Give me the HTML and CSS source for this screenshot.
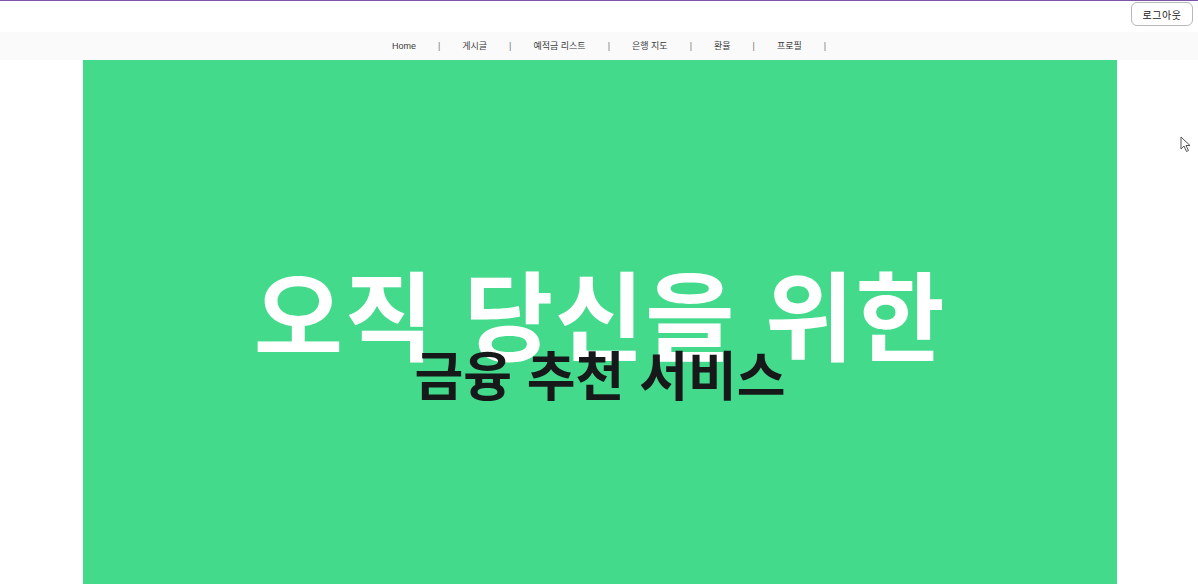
FILE: index.html
```html
<!DOCTYPE html>
<html lang="ko">
<head>
<meta charset="utf-8">
<title>금융 추천 서비스</title>
<link rel="stylesheet" href="styles.css">
</head>
<body>
<header class="topbar">
  <button class="logout">로그아웃</button>
</header>
<nav class="nav">
  <ul class="nav-list">
    <li class="nav-item nav-en">Home</li>
    <li class="nav-item">게시글</li>
    <li class="nav-item">예적금 리스트</li>
    <li class="nav-item">은행 지도</li>
    <li class="nav-item">환율</li>
    <li class="nav-item">프로필</li>
  </ul>
</nav>
<main class="hero">
  <h1 class="hero-title">오직 당신을 위한</h1>
  <h2 class="hero-sub">금융 추천 서비스</h2>
</main>
<svg class="cursor" width="12" height="18" viewBox="0 0 12 18" aria-hidden="true">
  <path d="M1 1 L1 13 L4 10 L6.5 15.5 L8.5 14.5 L6 9.5 L10 9.5 Z" fill="#fff" stroke="#555" stroke-width="1" stroke-linejoin="round"/>
</svg>
</body>
</html>
```
FILE: styles.css
```css
html, body {
  margin: 0;
  padding: 0;
  background: #ffffff;
  font-family: "Noto Sans CJK KR", "Noto Sans", sans-serif;
  overflow: hidden;
}

.topbar {
  height: 31px;
  border-top: 1px solid #7a55a8;
  display: flex;
  justify-content: flex-end;
  align-items: flex-start;
  padding-right: 5px;
}

.logout {
  margin-top: 1px;
  height: 24px;
  width: 62px;
  border: 1px solid #b8b8b8;
  border-radius: 6px;
  background: #ffffff;
  color: #222;
  font-family: "Noto Sans CJK KR", sans-serif;
  font-size: 10px;
  padding: 0;
  letter-spacing: 0.5px;
}

.nav {
  height: 28px;
  background: #fafafa;
  display: flex;
  justify-content: center;
  align-items: center;
}

.nav-list {
  list-style: none;
  margin: 0;
  padding: 0 0 0 20px;
  display: flex;
  align-items: center;
  gap: 22px;
}

.nav-item {
  font-size: 9px;
  color: #3a3a3a;
  display: flex;
  gap: 22px;
  align-items: center;
  line-height: 12px;
}

.nav-item::after {
  content: "|";
  color: #777;
  font-family: "Liberation Sans", sans-serif;
  font-size: 9px;
}

.nav-en {
  font-family: "Liberation Sans", Arial, sans-serif;
}

.hero {
  width: 1034px;
  height: 640px;
  margin: 0 81px 0 83px;
  background: #43da8c;
  padding-top: 202px;
  box-sizing: border-box;
  text-align: center;
}

.hero-title {
  margin: 0;
  font-size: 97px;
  line-height: 1;
  font-weight: 700;
  color: #ffffff;
  letter-spacing: 1.5px;
}

.hero-sub {
  margin: -12px 0 0;
  font-size: 53px;
  line-height: 1;
  font-weight: 700;
  color: #16181a;
  position: relative;
}

.cursor {
  position: absolute;
  left: 1180px;
  top: 136px;
}
```
